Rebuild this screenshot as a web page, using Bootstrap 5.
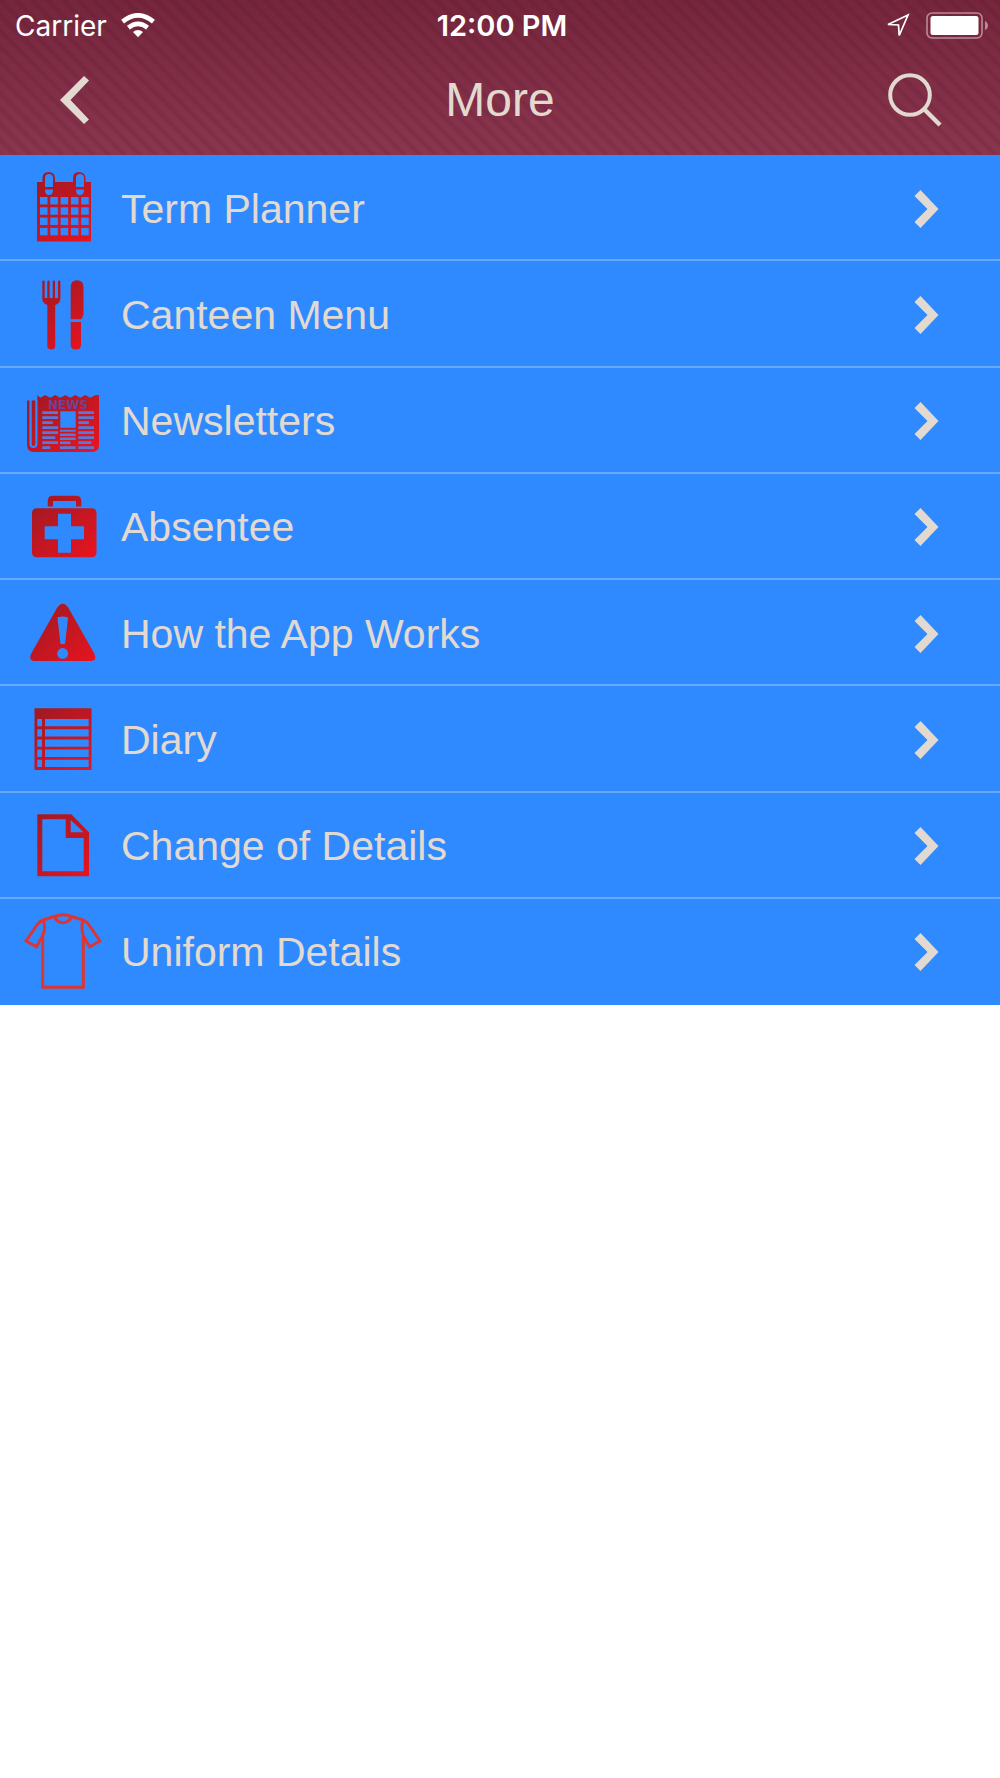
<!DOCTYPE html>
<html lang="en">
<head>
<meta charset="utf-8">
<meta name="viewport" content="width=device-width, initial-scale=1">
<title>More</title>
<link href="https://cdn.jsdelivr.net/npm/bootstrap@5.3.0/dist/css/bootstrap.min.css" rel="stylesheet">
<style>
  :root { --row-blue: #308aff; --cream: #e2dad0; }
  body { font-family: "Liberation Sans", Arial, sans-serif; background: #fff; }
  .app-header {
    height: 155px;
    color: var(--cream);
    background:
      repeating-linear-gradient(45deg, rgba(70,0,30,.13) 0, rgba(70,0,30,0) 4px, rgba(70,0,30,0) 7px, rgba(70,0,30,.13) 11px),
      linear-gradient(#75263c, #8a364f);
  }
  .status-bar { font-family: Inter, sans-serif; font-size: 28px; line-height: 34px; padding: 9px 11px 0 15px; color: #fff; }
  .status-bar svg { margin-bottom: 2px; }
  .clock { font-size: 29px; font-weight: 600; }
  .wifi { margin-left: 14px; }
  .side { flex: 1 1 0; }
  .title-bar { height: 114px; padding: 0 56px; }
  .title-bar h1 { font-size: 48px; line-height: 56px; font-weight: 400; }
  .icon-btn { background: none; border: 0; padding: 0; color: inherit; line-height: 0; }
  .menu-list { min-height: 850px; }
  .menu-row {
    padding: 3px 61px 0 20px; gap: 17px;
    background: var(--row-blue); color: var(--cream);
    font-size: 41px; line-height: 48px;
    border-bottom: 2px solid #66a8fb;
  }
  .menu-row:hover { color: var(--cream); }
  .menu-icon { width: 84px; height: 104px; margin-top: -3px; }
  li:last-child .menu-row { border-bottom-color: var(--row-blue); }
  .hole { fill: var(--row-blue); }
  .print { fill: #5a78d8; }
  .masthead { font: bold 12px "DejaVu Sans", sans-serif; fill: #6a4494; }
  svg { display: block; flex: none; }
</style>
</head>
<body>
<svg width="0" height="0" class="position-absolute" aria-hidden="true">
  <defs>
    <linearGradient id="red" gradientUnits="userSpaceOnUse" x1="14" y1="20" x2="72" y2="86">
      <stop offset="0" stop-color="#9c1a24"/><stop offset="1" stop-color="#e81420"/>
    </linearGradient>
    <pattern id="days" x="20" y="42" width="10.3" height="10.3" patternUnits="userSpaceOnUse">
      <rect width="7.6" height="7.4" fill="#308aff"/>
    </pattern>
    <symbol id="chevron" viewBox="0 0 24 38"><path fill="#e2dad0" d="M0 6 6 0l18 19L6 38l-6-6 13-13z"/></symbol>
  </defs>
</svg>

<header class="app-header">
  <div class="status-bar d-flex align-items-center">
    <div class="side d-flex align-items-center">
      <span>Carrier</span>
      <svg class="wifi" width="34" height="25" viewBox="0 0 34 25" fill="none" stroke="#fff" aria-label="Wi-Fi">
        <path stroke-width="4.6" d="M1.6 8.6Q17-4 32.4 8.6"/>
        <path stroke-width="4.6" d="M7.4 14.6Q17 7 26.6 14.6"/>
        <path fill="#fff" stroke="none" d="M12 19q5-4 10 0l-5 5.3z"/>
      </svg>
    </div>
    <span class="clock">12:00 PM</span>
    <div class="side d-flex align-items-center justify-content-end">
      <svg class="me-3" width="24" height="25" viewBox="0 0 24 25" fill="none" stroke="#fff" stroke-width="1.7" aria-label="Location">
        <path d="M22 2 2 11.5l10.5.5.7 10.5z"/>
      </svg>
      <svg width="63" height="27" viewBox="0 0 63 27" aria-label="Battery full">
        <rect x="1" y="1" width="55" height="25" rx="5" fill="none" stroke="#b98a98" stroke-width="1.6"/>
        <rect x="4.5" y="4" width="48" height="19" rx="2.5" fill="#fff"/>
        <path fill="#b98a98" d="M59 9q3 1.5 3 4.5t-3 4.5z"/>
      </svg>
    </div>
  </div>
  <div class="title-bar d-flex align-items-center">
    <div class="side d-flex">
      <button type="button" class="icon-btn ps-1" aria-label="Back">
        <svg width="30" height="50" viewBox="0 0 30 50"><path fill="#e2dad0" d="M24 1l5 4.5L10.5 25 29 44.5 24 49 0 25z"/></svg>
      </button>
    </div>
    <h1 class="m-0">More</h1>
    <div class="side d-flex justify-content-end">
      <button type="button" class="icon-btn" aria-label="Search">
        <svg width="56" height="54" viewBox="0 0 56 54" fill="none" stroke="#e2dad0" stroke-width="4">
          <circle cx="22" cy="22" r="19.8"/><path stroke-width="4.5" d="m36 36 16 16"/>
        </svg>
      </button>
    </div>
  </div>
</header>

<main>
<ul class="menu-list list-unstyled m-0 d-flex flex-column">
  <li class="d-flex flex-fill"><a href="#" class="menu-row w-100 d-flex align-items-center text-decoration-none">
    <svg class="menu-icon" viewBox="0 0 84 104" fill="url(#red)" aria-hidden="true">
      <path d="M17 27h5.5v-4q0-6 6-6t6.5 6v4h18v-4q0-6 6-6t6.5 6v4H71v59.5H17z"/>
      <path class="hole" d="M25 32v-9q0-4 4-4t4 4v9zM25 34.5h8q0 5.5-4 5.5t-4-5.500zM56 32v-9q0-4 4-4t4 4v9zM56 34.5h8q0 5.5-4 5.5t-4-5.500z"/>
      <rect x="20" y="42" width="50" height="40" fill="url(#days)"/>
    </svg>
    <span class="flex-grow-1">Term Planner</span>
    <svg width="25" height="38"><use href="#chevron"/></svg>
  </a></li>
  <li class="d-flex flex-fill"><a href="#" class="menu-row w-100 d-flex align-items-center text-decoration-none">
    <svg class="menu-icon" viewBox="0 0 84 104" fill="url(#red)" aria-hidden="true">
      <path d="M22.3 20q1.2-1.2 2.4 0v17h2.6V20q1.2-1.2 2.4 0v17h3V20q1.2-1.2 2.3 0v17h3V20q1.2-1.2 2.4 0v18q0 4-5.2 6v41q0 3.5-3.9 3.5T27.3 85V44q-5-2-5-6z"/>
      <path d="M50.7 58.3V26q0-6.700 6.4-6.700T63.500 26v28l-2 4.300zM50.700 61H61v23q0 4.500-5.100 4.500T50.700 84z"/>
    </svg>
    <span class="flex-grow-1">Canteen Menu</span>
    <svg width="25" height="38"><use href="#chevron"/></svg>
  </a></li>
  <li class="d-flex flex-fill"><a href="#" class="menu-row w-100 d-flex align-items-center text-decoration-none">
    <svg class="menu-icon" viewBox="0 0 84 104" fill="url(#red)" aria-hidden="true">
      <path d="M7 32.500h10.300V27l3 2.800 5-2.800 5 2.800 5-2.800 5 2.800 5-2.800 5 2.800 5-2.800 5 2.800 5-2.800 5 2.800 5-2.800 3.700 0V77q0 7-7 7H14q-7 0-7-7z"/>
      <path d="M10.600 32V76q0 3 2.900 3t2.900-3V32" fill="none" stroke="#308aff" stroke-width="2.200"/>
      <text class="masthead" x="48" y="41" text-anchor="middle">NEWS</text>
      <path class="print" d="M22.300 43.300H38V46H22.300zM22.300 48.300H38V51H22.300zM22.300 53.300h10.500V56H22.300zM22.300 58.300H38V61H22.300zM22.300 63.300H38V66H22.300zM22.300 68.300h13V71h-13zM22.300 73.300H38V76H22.300zM22.300 78.300h8V81h-8z
        M40 61.700h15.700v2H40zM40 65.500h15.700V68H40zM40 69.500h15.700V72H40zM40 73.600h10.500V76H40zM40 78.300h15.700V81H40z
        M58.300 43.300H74V46H58.300zM58.300 48.300H74V51H58.300zM58.300 53.300h10.500V56H58.300zM58.300 58.300H74V61H58.300zM58.300 63.300H74V66H58.300zM58.300 68.300H74V71H58.300zM58.300 73.300h13V76h-13zM58.300 78.300H74V81H58.300z"/>
      <path class="hole" d="M40.300 43.300h15.400v16.500H40.300z"/>
    </svg>
    <span class="flex-grow-1">Newsletters</span>
    <svg width="25" height="38"><use href="#chevron"/></svg>
  </a></li>
  <li class="d-flex flex-fill"><a href="#" class="menu-row w-100 d-flex align-items-center text-decoration-none">
    <svg class="menu-icon" viewBox="0 0 84 104" fill="url(#red)" aria-hidden="true">
      <path d="M27.700 32.500V27q0-5.300 5.300-5.300h23q5.300 0 5.300 5.300v5.500H56V27H33v5.500z"/>
      <rect x="12" y="34.300" width="64.500" height="49" rx="4.500"/>
      <path class="hole" d="M38 39.700h13v12.600h13v13H51v13.400H38V65.300H24.700v-13H38z"/>
    </svg>
    <span class="flex-grow-1">Absentee</span>
    <svg width="25" height="38"><use href="#chevron"/></svg>
  </a></li>
  <li class="d-flex flex-fill"><a href="#" class="menu-row w-100 d-flex align-items-center text-decoration-none">
    <svg class="menu-icon" viewBox="0 0 84 104" fill="url(#red)" aria-hidden="true">
      <path d="M37.500 27q5.200-7 10.400 0L74 73q4 8-4 8H15.500q-8 0-4-8z"/>
      <path class="hole" d="M37.500 38q0-1.500 5.300-1.500T48 38l-3 26h-4.500z"/>
      <circle class="hole" cx="42.700" cy="73.500" r="5.400"/>
    </svg>
    <span class="flex-grow-1">How the App Works</span>
    <svg width="25" height="38"><use href="#chevron"/></svg>
  </a></li>
  <li class="d-flex flex-fill"><a href="#" class="menu-row w-100 d-flex align-items-center text-decoration-none">
    <svg class="menu-icon" viewBox="0 0 84 104" fill="url(#red)" aria-hidden="true">
      <path d="M14.500 22.300h57V84h-57z"/>
      <path class="hole" d="M17.300 33H22v7.300h-4.700zM25 33h43.700v7.300H25zM17.300 43.200H22v7.300h-4.700zM25 43.200h43.700v7.300H25zM17.300 53.400H22v7.300h-4.700zM25 53.400h43.700v7.300H25zM17.300 63.600H22v7.300h-4.700zM25 63.600h43.700v7.300H25zM17.300 73.800H22V81h-4.700zM25 73.800h43.700V81H25z"/>
    </svg>
    <span class="flex-grow-1">Diary</span>
    <svg width="25" height="38"><use href="#chevron"/></svg>
  </a></li>
  <li class="d-flex flex-fill"><a href="#" class="menu-row w-100 d-flex align-items-center text-decoration-none">
    <svg class="menu-icon" viewBox="0 1 84 104" fill="url(#red)" aria-hidden="true">
      <path d="M17.300 22.300h34L69 40.300v44H17.300z"/>
      <path class="hole" d="M22.300 27.300h23.400V46h18v33.300H22.300zM50.700 28v12.300h12.800z"/>
    </svg>
    <span class="flex-grow-1">Change of Details</span>
    <svg width="25" height="38"><use href="#chevron"/></svg>
  </a></li>
  <li class="d-flex flex-fill"><a href="#" class="menu-row w-100 d-flex align-items-center text-decoration-none">
    <svg class="menu-icon" viewBox="0 3 84 104" fill="none" stroke="#dc3532" stroke-width="3" aria-hidden="true">
      <path d="M22.700 39.700V91.300h40.600V39.700M34.500 20.500Q43 17 51.500 20.500L63 24q3.500 1.500 6 5l11 16-10.500 5.700-6.200-11q-2.500-8-.3-15.700M34.500 20.500 23 24q-3.500 1.500-6 5L6 45l10.500 5.700 6.200-11q3.500-8 .3-15.700M34.500 20.500q2 6.200 8.500 6.200t8.500-6.200"/>
    </svg>
    <span class="flex-grow-1">Uniform Details</span>
    <svg width="25" height="38"><use href="#chevron"/></svg>
  </a></li>
</ul>
</main>
<script src="https://cdn.jsdelivr.net/npm/bootstrap@5.3.0/dist/js/bootstrap.bundle.min.js"></script>
</body>
</html>
